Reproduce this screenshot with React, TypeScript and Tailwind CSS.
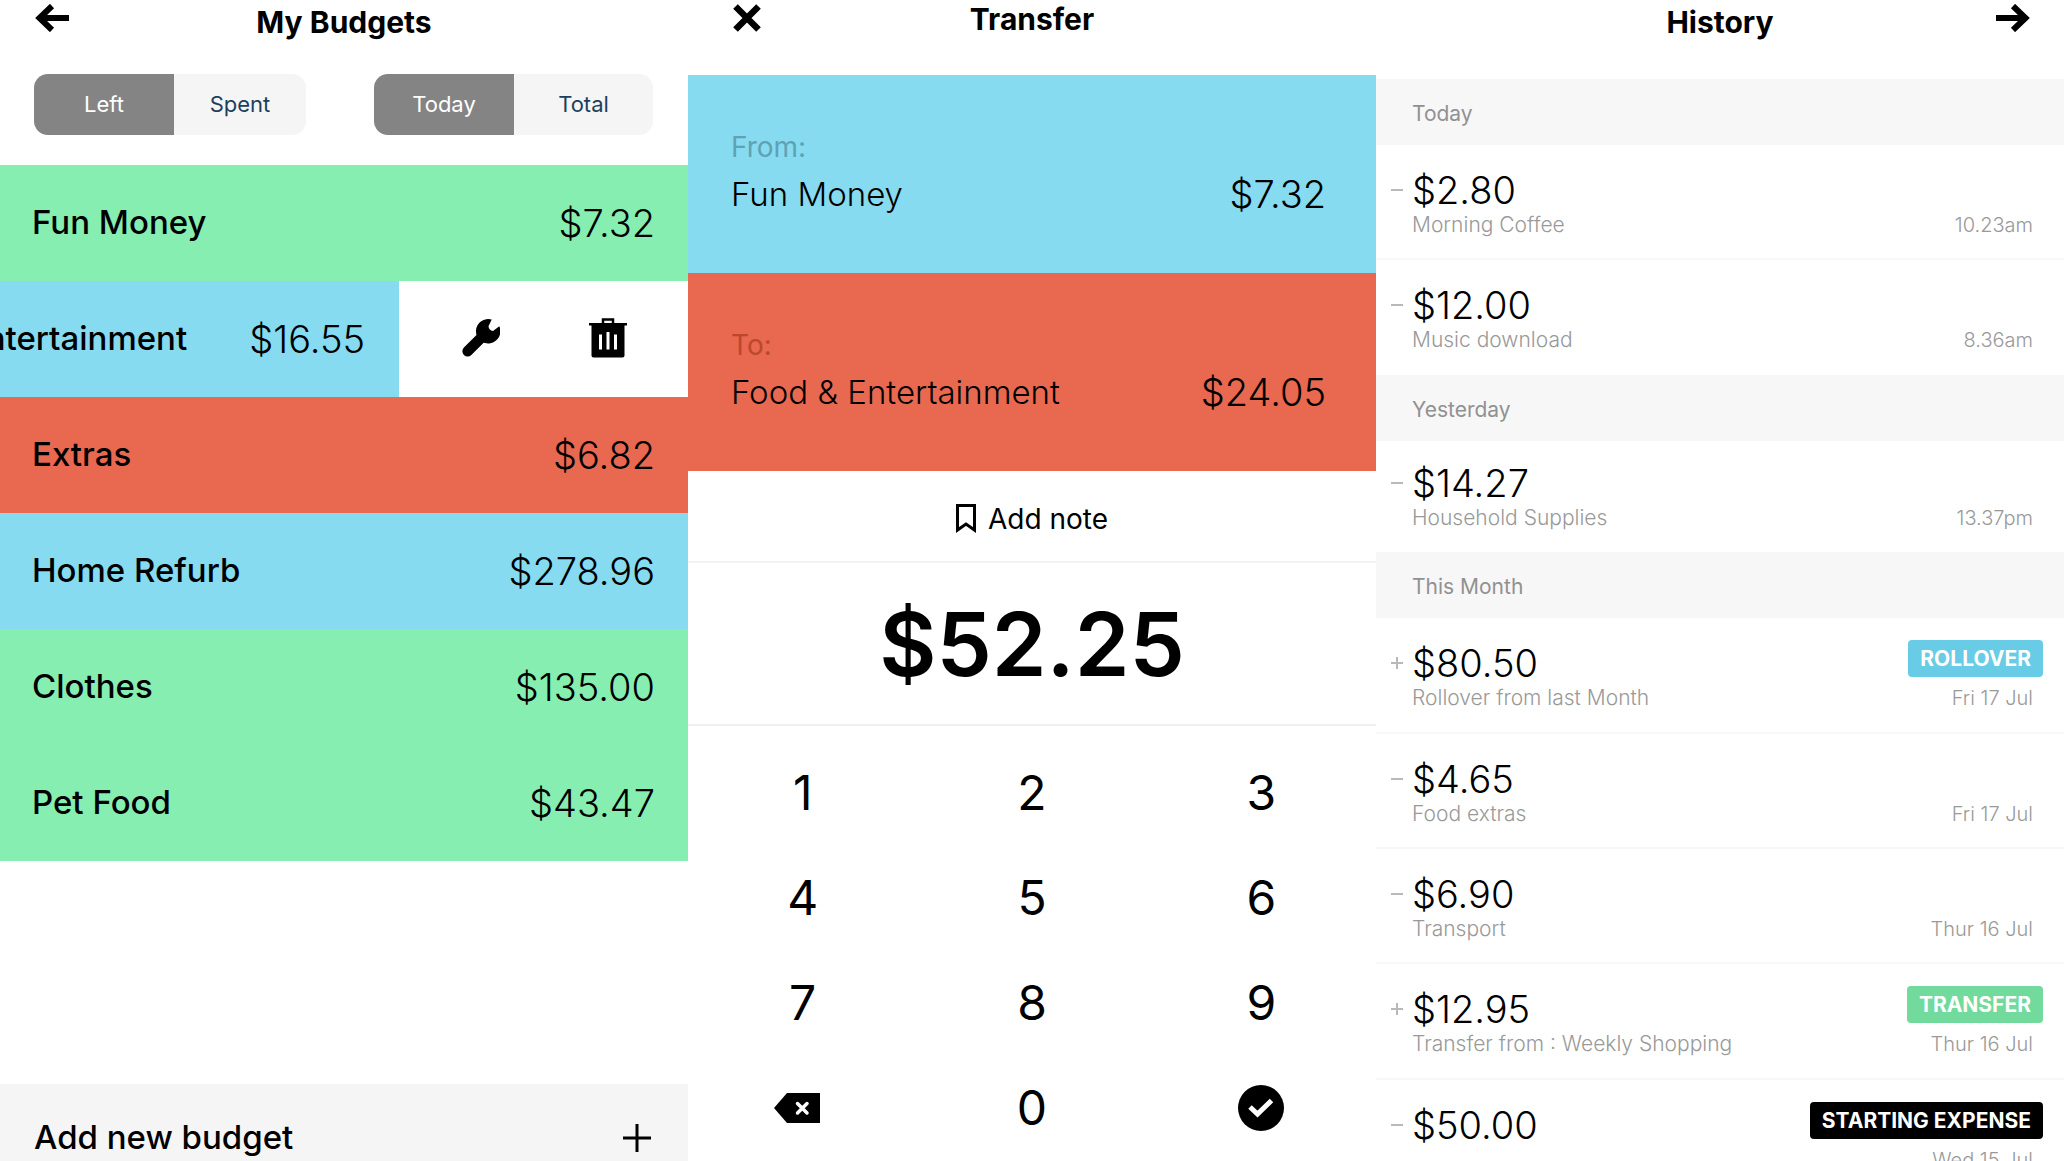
import React from "react";

type Budget = { name: string; amount: string; tone: string };

const GREEN = "bg-[#86eeb0]";
const BLUE = "bg-[#86dbf0]";
const RED = "bg-[#e86850]";

const budgets: Budget[] = [
  { name: "Extras", amount: "$6.82", tone: RED },
  { name: "Home Refurb", amount: "$278.96", tone: BLUE },
  { name: "Clothes", amount: "$135.00", tone: GREEN },
  { name: "Pet Food", amount: "$43.47", tone: GREEN },
];

type Entry = {
  sign: "+" | "-";
  amount: string;
  label?: string;
  when: string;
  tag?: string;
  tagTone?: string;
};

const history: { title: string; compact?: boolean; entries: Entry[] }[] = [
  {
    title: "Today",
    entries: [
      { sign: "-", amount: "$2.80", label: "Morning Coffee", when: "10.23am" },
      { sign: "-", amount: "$12.00", label: "Music download", when: "8.36am" },
    ],
  },
  {
    title: "Yesterday",
    compact: true,
    entries: [{ sign: "-", amount: "$14.27", label: "Household Supplies", when: "13.37pm" }],
  },
  {
    title: "This Month",
    entries: [
      { sign: "+", amount: "$80.50", label: "Rollover from last Month", when: "Fri 17 Jul", tag: "ROLLOVER", tagTone: "bg-[#68cce6]" },
      { sign: "-", amount: "$4.65", label: "Food extras", when: "Fri 17 Jul" },
      { sign: "-", amount: "$6.90", label: "Transport", when: "Thur 16 Jul" },
      { sign: "+", amount: "$12.95", label: "Transfer from : Weekly Shopping", when: "Thur 16 Jul", tag: "TRANSFER", tagTone: "bg-[#71da9c]" },
      { sign: "-", amount: "$50.00", when: "Wed 15 Jul", tag: "STARTING EXPENSE", tagTone: "bg-black" },
    ],
  },
];

function ArrowIcon({ flip = false }: { flip?: boolean }) {
  return (
    <svg width="34" height="28" viewBox="0 0 34 28" fill="none" stroke="black" strokeWidth="6" className={flip ? "rotate-180" : ""} aria-hidden="true">
      <path d="M17 2 4.5 14 17 26" />
      <path d="M5 14H34" />
    </svg>
  );
}

function CloseIcon() {
  return (
    <svg width="28" height="28" viewBox="0 0 28 28" stroke="black" strokeWidth="6.5" aria-hidden="true">
      <path d="M2.5 2.5 25.5 25.5M25.5 2.5 2.5 25.5" />
    </svg>
  );
}

function WrenchIcon() {
  return (
    <svg width="38" height="38" viewBox="0 0 38 38" aria-hidden="true">
      <path d="M5.6 32.3 21.5 16.5" stroke="black" strokeWidth="10.5" strokeLinecap="round" />
      <path d="M29.7.6 26.5 7.2Q27 11.500 31 12L37.300 7.300A12.200 12.200 0 1 1 29.700.6Z" />
    </svg>
  );
}

function TrashIcon() {
  return (
    <svg width="38" height="40" viewBox="0 0 38 40" aria-hidden="true">
      <path d="M14 6V1.500h10V6" fill="none" stroke="black" strokeWidth="2.500" />
      <path d="M0 5h38v2.500H0z" />
      <path d="M2.500 7h33v30.500a2 2 0 0 1-2 2h-29a2 2 0 0 1-2-2z" />
      <path d="M11.500 16.500v15M19 14v17.500M26.500 16.500v15" stroke="white" strokeWidth="3" />
    </svg>
  );
}

function BookmarkIcon() {
  return (
    <svg width="20" height="30" viewBox="0 0 20 30" fill="none" stroke="black" strokeWidth="3" aria-hidden="true">
      <path d="M1.500 1.500h17v24.500L10 20l-8.500 6z" />
    </svg>
  );
}

function BackspaceIcon() {
  return (
    <svg width="46" height="30" viewBox="0 0 46 30" aria-hidden="true">
      <path d="M13 0H46V30H13L0 15z" />
      <path d="M23.500 10.500 33 20M33 10.500 23.500 20" stroke="white" strokeWidth="3.500" strokeLinecap="round" />
    </svg>
  );
}

function ConfirmIcon() {
  return (
    <svg width="46" height="46" viewBox="0 0 46 46" aria-hidden="true">
      <circle cx="23" cy="23" r="23" />
      <path d="M12 22 19.500 29 33.500 15.500" fill="none" stroke="white" strokeWidth="5" />
    </svg>
  );
}

function PlusIcon() {
  return (
    <svg width="28" height="28" viewBox="0 0 28 28" stroke="black" strokeWidth="3" aria-hidden="true">
      <path d="M14 0V28M0 14H28" />
    </svg>
  );
}

function SignIcon({ sign }: { sign: "+" | "-" }) {
  return (
    <svg width="12" height="12" viewBox="0 0 12 12" stroke="#b9b9b9" strokeWidth="2" role="img" aria-label={sign === "+" ? "plus" : "minus"}>
      <path d={sign === "+" ? "M0 6H12M6 0V12" : "M0 6H12"} />
    </svg>
  );
}

function Toggle({ label, on, off, size }: { label: string; on: string; off: string; size: string }) {
  return (
    <div role="group" aria-label={label} className={`flex h-[61px] overflow-hidden rounded-[14px] text-[22px] ${size}`}>
      <button type="button" aria-pressed="true" className="w-[140px] shrink-0 bg-[#848484] text-white">
        {on}
      </button>
      <button type="button" aria-pressed="false" className="grow bg-[#f5f5f5] text-[#1c3f5e]">
        {off}
      </button>
    </div>
  );
}

function BudgetRow({ name, amount, tone }: Budget) {
  return (
    <li className={`flex h-[116px] items-center justify-between pr-[33px] pl-8 ${tone}`}>
      <span className="text-[33px] font-medium">{name}</span>
      <span className="text-[38px] font-light">{amount}</span>
    </li>
  );
}

function BudgetsScreen() {
  return (
    <section className="flex min-w-0 flex-col overflow-hidden">
      <header className="grid h-[74px] shrink-0 grid-cols-[1fr_auto_1fr] items-start px-[35px]">
        <button type="button" aria-label="Back" className="mt-1 justify-self-start">
          <ArrowIcon />
        </button>
        <h1 className="pt-1 text-3xl leading-9 font-bold">My Budgets</h1>
      </header>
      <div className="flex shrink-0 justify-between pr-[35px] pb-[30px] pl-[34px]">
        <Toggle label="Amount shown" on="Left" off="Spent" size="w-[272px]" />
        <Toggle label="Period" on="Today" off="Total" size="w-[279px]" />
      </div>
      <ul className="shrink-0">
        <BudgetRow name="Fun Money" amount="$7.32" tone={GREEN} />
        <li className="flex h-[116px]">
          <div className={`flex w-[58%] items-center justify-end gap-[62px] overflow-hidden pr-[34px] whitespace-nowrap ${BLUE}`}>
            <span className="text-[33px] font-medium">Food &amp; Entertainment</span>
            <span className="text-[38px] font-light">$16.55</span>
          </div>
          <div className="flex grow items-center justify-between pr-[61px] pb-0.5 pl-[63px]">
            <button type="button" aria-label="Edit budget">
              <WrenchIcon />
            </button>
            <button type="button" aria-label="Delete budget">
              <TrashIcon />
            </button>
          </div>
        </li>
        {budgets.map((b) => (
          <BudgetRow key={b.name} {...b} />
        ))}
      </ul>
      <button type="button" className="mt-auto flex h-[77px] shrink-0 items-center justify-between bg-[#f5f5f5] pt-[30px] pr-[37px] pl-[34px]">
        <span className="text-[33px] font-medium">Add new budget</span>
        <PlusIcon />
      </button>
    </section>
  );
}

function TransferCard({ label, name, amount, tone, labelTone }: { label: string; name: string; amount: string; tone: string; labelTone: string }) {
  return (
    <div className={`h-[198px] shrink-0 pt-[52px] pr-[50px] pl-[43px] ${tone}`}>
      <p className={`text-[28px] leading-10 ${labelTone}`}>{label}</p>
      <div className="flex justify-between leading-[54px]">
        <span className="text-[33px] font-light">{name}</span>
        <span className="text-[38px] font-light">{amount}</span>
      </div>
    </div>
  );
}

function TransferScreen() {
  return (
    <section className="flex min-w-0 flex-col overflow-hidden">
      <header className="grid h-[75px] shrink-0 grid-cols-[1fr_auto_1fr] items-start px-[45px]">
        <button type="button" aria-label="Close" className="mt-1 justify-self-start">
          <CloseIcon />
        </button>
        <h1 className="pt-px text-3xl leading-9 font-bold">Transfer</h1>
      </header>
      <TransferCard label="From:" name="Fun Money" amount="$7.32" tone={BLUE} labelTone="text-[#5fa2b4]" />
      <TransferCard label="To:" name="Food & Entertainment" amount="$24.05" tone={RED} labelTone="text-[#bd472e]" />
      <button type="button" className="flex h-[92px] shrink-0 items-center justify-center gap-3 border-b-2 border-[#f2f2f2] pt-1.5 text-[28px]">
        <BookmarkIcon />
        Add note
      </button>
      <output className="flex h-[163px] shrink-0 items-center justify-center border-b-2 border-[#f0f0f0] text-[88px] font-semibold">$52.25</output>
      <div className="grid auto-rows-[105px] grid-cols-3 pt-3.5 text-5xl">
        {["1", "2", "3", "4", "5", "6", "7", "8", "9"].map((d) => (
          <button key={d} type="button">
            {d}
          </button>
        ))}
        <button type="button" aria-label="Delete digit" className="flex items-center justify-center pr-3">
          <BackspaceIcon />
        </button>
        <button type="button">0</button>
        <button type="button" aria-label="Confirm" className="flex items-center justify-center">
          <ConfirmIcon />
        </button>
      </div>
    </section>
  );
}

function HistoryRow({ entry, compact }: { entry: Entry; compact?: boolean }) {
  const height = compact ? "h-[111px]" : entry.tag ? "h-[116px] pt-[3px]" : "h-[115px] pt-[3px]";
  return (
    <li className={`flex justify-between border-b-2 border-[#f8f8f8] pr-[21px] pl-[15px] last:border-b-0 ${height}`}>
      <div className="grid grid-cols-[auto_1fr] items-center gap-x-[9px] self-start pt-[22px]">
        <SignIcon sign={entry.sign} />
        <span className="text-[38px] leading-10 font-light">{entry.amount}</span>
        {entry.label && <span className="col-start-2 text-[21px] leading-[30px] font-light text-[#999]">{entry.label}</span>}
      </div>
      <div className="flex flex-col items-end pt-[19px]">
        <div className="h-[43px]">
          {entry.tag && (
            <span className={`flex h-[37px] items-center rounded-[4px] px-3 text-[21px] font-bold text-white ${entry.tagTone}`}>{entry.tag}</span>
          )}
        </div>
        <time className="pr-2.5 text-[20px] leading-[30px] font-light text-[#999]">{entry.when}</time>
      </div>
    </li>
  );
}

function HistoryScreen() {
  return (
    <section className="min-w-0 overflow-hidden">
      <header className="grid h-[79px] grid-cols-[1fr_auto_1fr] items-start px-[34px]">
        <h1 className="col-start-2 pt-1 text-3xl leading-9 font-bold">History</h1>
        <button type="button" aria-label="Forward" className="mt-1 justify-self-end">
          <ArrowIcon flip />
        </button>
      </header>
      {history.map((group) => (
        <section key={group.title}>
          <h2 className="flex h-[66px] items-center bg-[#f7f7f7] pt-1 pl-9 text-[21px] text-[#919191]">{group.title}</h2>
          <ul>
            {group.entries.map((entry) => (
              <HistoryRow key={entry.amount} entry={entry} compact={group.compact} />
            ))}
          </ul>
        </section>
      ))}
    </section>
  );
}

export default function App() {
  return (
    <main className="grid h-screen grid-cols-3 overflow-hidden bg-white font-['Inter',sans-serif] text-black">
      <BudgetsScreen />
      <TransferScreen />
      <HistoryScreen />
    </main>
  );
}
